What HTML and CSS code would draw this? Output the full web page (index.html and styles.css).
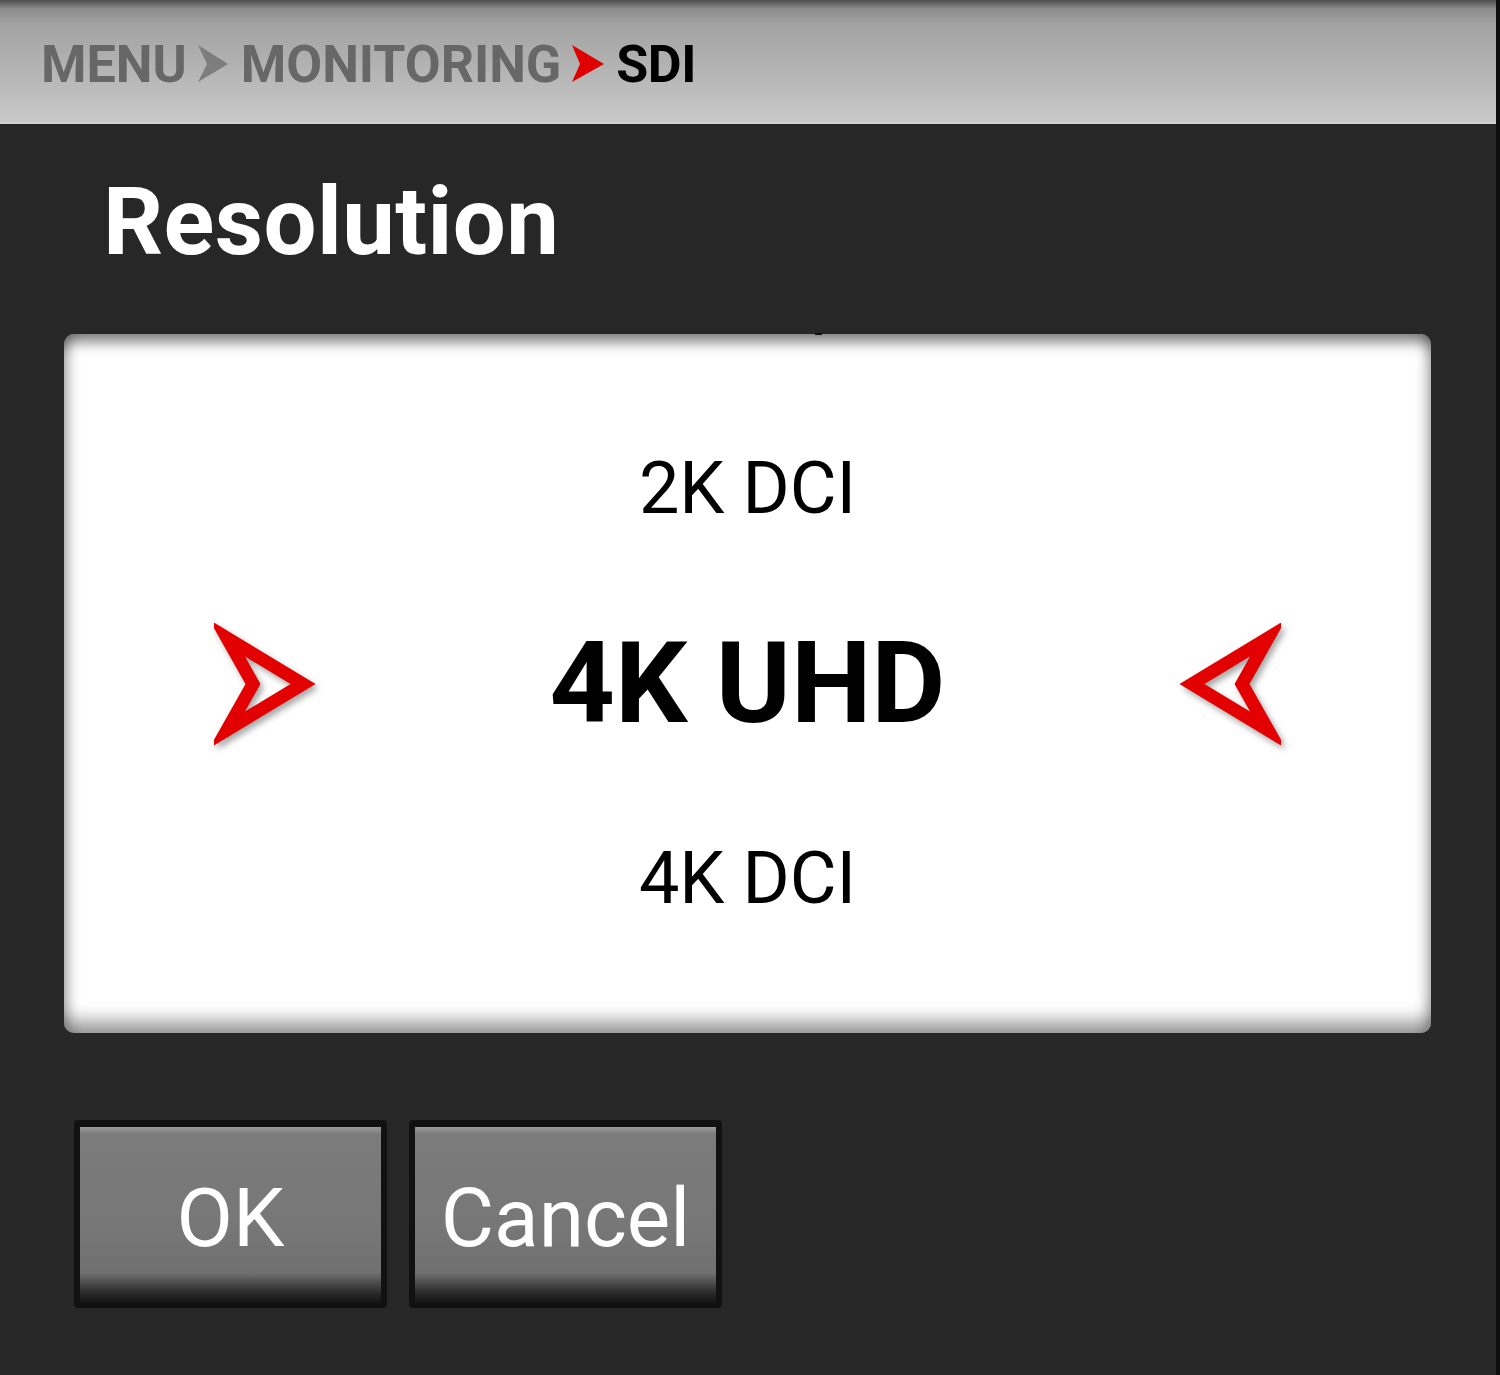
FILE: index.html
```html
<!DOCTYPE html>
<html lang="en">
<head>
  <meta charset="UTF-8">
  <meta name="viewport" content="width=device-width, initial-scale=1.0">
  <title>Resolution</title>
  <link rel="stylesheet" href="styles.css">
</head>
<body>
  <div class="screen">
    <!-- Breadcrumb bar -->
    <div class="crumbs">
      <span class="crumb">MENU</span>
      <svg class="crumb-arrow" width="32" height="40" viewBox="0 0 32 40">
        <polygon points="1,1 31,20 1,38 10,20" fill="#7d7d7d"/>
      </svg>
      <span class="crumb">MONITORING</span>
      <svg class="crumb-arrow crumb-arrow-red" width="34" height="40" viewBox="0 0 34 40">
        <polygon points="1,1 33,20 1,38 9,20" fill="#e00000"/>
      </svg>
      <span class="crumb crumb-current">SDI</span>
    </div>

    <h1 class="title">Resolution</h1>

    <!-- Option picker -->
    <div class="picker">
      <div class="picker-row">2K DCI</div>
      <div class="picker-row picker-selected">
        <svg class="pick-arrow" width="104" height="122" viewBox="0 0 104 122">
          <polygon points="13,15 89,61 13,107 39,61" fill="none" stroke="#e30000" stroke-width="13" stroke-linejoin="miter"/>
        </svg>
        <span>4K UHD</span>
        <svg class="pick-arrow" width="104" height="122" viewBox="0 0 104 122">
          <polygon points="91,15 15,61 91,107 65,61" fill="none" stroke="#e30000" stroke-width="13" stroke-linejoin="miter"/>
        </svg>
      </div>
      <div class="picker-row">4K DCI</div>
    </div>

    <!-- Actions -->
    <div class="actions">
      <button class="btn" type="button">OK</button>
      <button class="btn" type="button">Cancel</button>
    </div>
  </div>
</body>
</html>
```

FILE: styles.css
```css
body {
  margin: 0;
  padding: 0;
  background-color: #272727;
  font-family: Roboto, "Liberation Sans", sans-serif;
}

.screen {
  width: 1500px;
  height: 1375px;
  box-sizing: border-box;
  border-right: 4px solid #0e0e0e;
  background-color: #272727;
  overflow: hidden;
}

.crumbs {
  height: 124px;
  box-sizing: border-box;
  border-bottom: 2px solid #d2d2d2;
  padding-left: 41px;
  padding-top: 6px;
  display: flex;
  align-items: center;
  background: linear-gradient(#4c4c4c 0, #8c8c8c 9px, #a3a3a3 24px, #b4b4b4 70px, #c9c9c9 122px);
}

.crumb {
  font-size: 52px;
  font-weight: 700;
  color: #676767;
  letter-spacing: 0;
}

.crumb-current {
  color: #000;
  letter-spacing: -0.5px;
}

.crumb-arrow {
  margin: 0 12px 0 10px;
}

.crumb-arrow-red {
  margin: 0 11px 0 10px;
}

.title {
  margin: 0;
  padding: 48px 0 0 103px;
  height: 162px;
  font-size: 94px;
  font-weight: 700;
  line-height: 100px;
  color: #fff;
  letter-spacing: 0.4px;
}

.picker {
  position: relative;
  margin-left: 64px;
  width: 1367px;
  height: 699px;
  border-radius: 10px;
  background: #fff;
  display: flex;
  flex-direction: column;
  justify-content: center;
  box-shadow:
    inset 0 16px 14px -8px rgba(0, 0, 0, 0.5),
    inset 0 -20px 18px -8px rgba(0, 0, 0, 0.4),
    inset 14px 0 12px -8px rgba(0, 0, 0, 0.22),
    inset -14px 0 12px -8px rgba(0, 0, 0, 0.22);
}

.picker::before {
  content: "";
  position: absolute;
  top: -1px;
  left: 751px;
  width: 7px;
  height: 2px;
  background: #111;
}

.picker-row {
  height: 195px;
  line-height: 195px;
  text-align: center;
  font-size: 72px;
  color: #000;
}

.picker-selected {
  display: flex;
  justify-content: space-between;
  align-items: center;
  padding: 0 150px;
  font-size: 114px;
  font-weight: 700;
}

.pick-arrow {
  filter: drop-shadow(3px 4px 3px rgba(0, 0, 0, 0.35));
}

.actions {
  display: flex;
  gap: 22px;
  padding: 87px 0 0 74px;
}

.btn {
  width: 313px;
  height: 188px;
  box-sizing: border-box;
  border: 6px solid #111;
  border-top-width: 7px;
  border-bottom-width: 3px;
  border-radius: 4px;
  padding: 4px 0 0 0;
  background: linear-gradient(#9a9a9a 0, #7b7b7b 7px, #777 55%, #707070 82%, #2a2a2a 93%, #101010 100%);
  color: #fff;
  font-family: Roboto, "Liberation Sans", sans-serif;
  font-size: 82px;
  font-weight: 400;
  cursor: pointer;
}
```
